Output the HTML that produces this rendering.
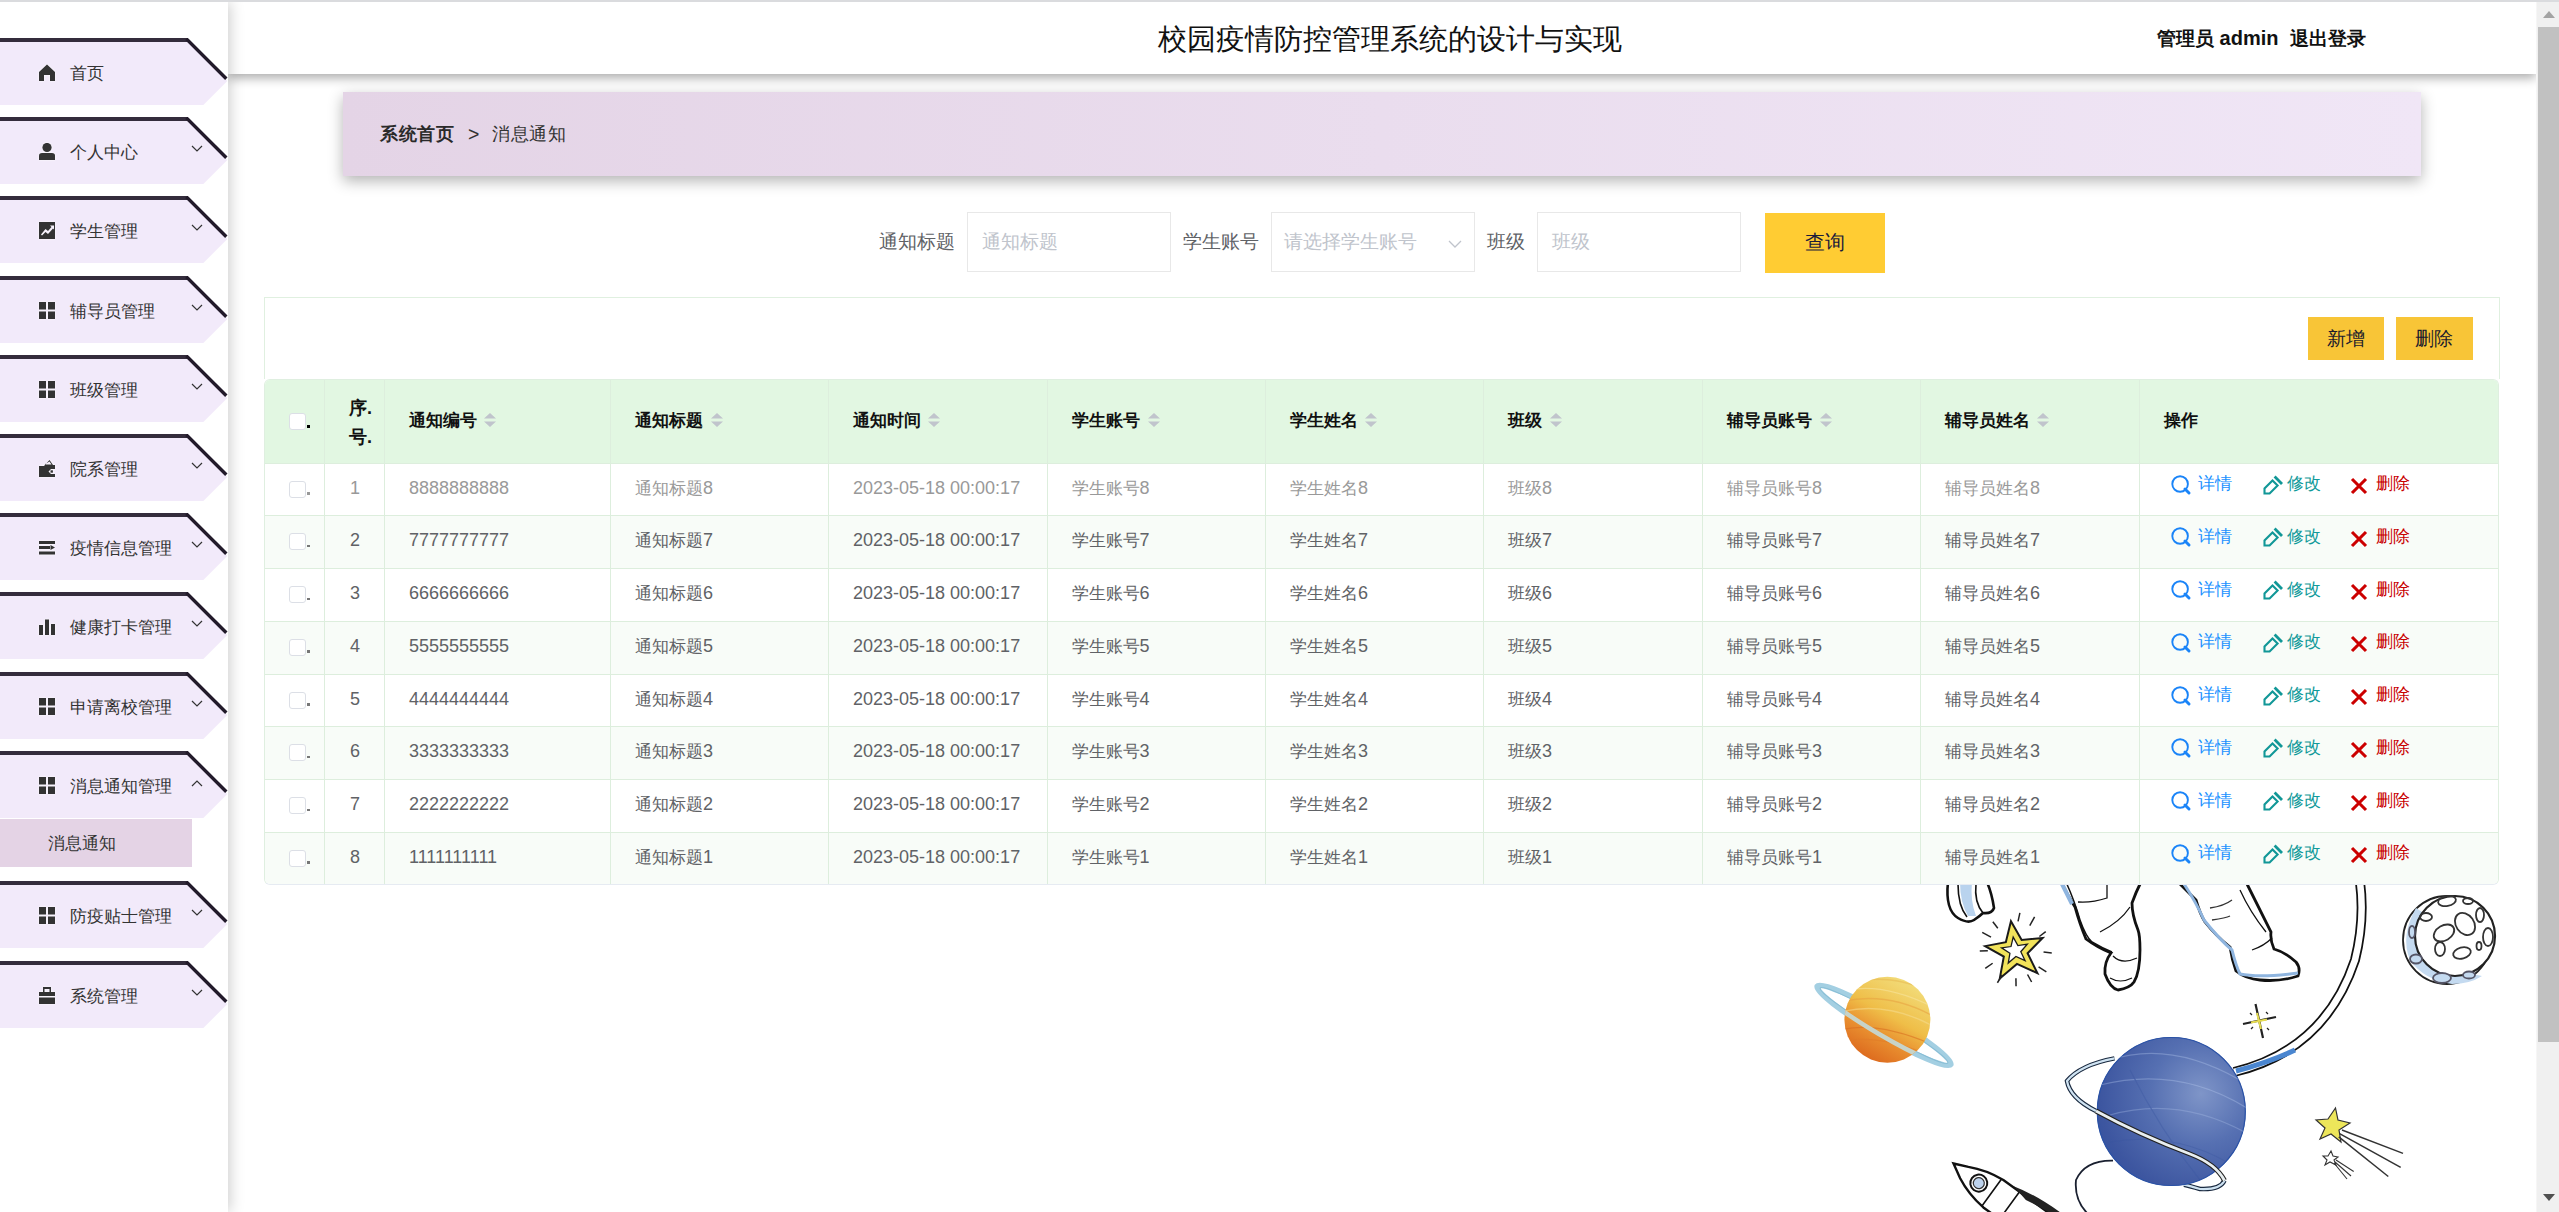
<!DOCTYPE html>
<html><head><meta charset="utf-8"><title>消息通知</title>
<style>
*{box-sizing:border-box;margin:0;padding:0}
html,body{width:2559px;height:1212px;overflow:hidden;background:#fff;font-family:"Liberation Sans", sans-serif;}
.abs{position:absolute}
#topline{position:absolute;left:0;top:0;width:2559px;height:2px;background:#dadbde;z-index:10}
#side{position:absolute;left:0;top:2px;width:228px;height:1210px;background:#fff;box-shadow:2px 0 14px rgba(0,0,0,0.2);z-index:5}
.mi{position:absolute;left:0;width:230px;height:68px}
.mi .shape{position:absolute;left:0;top:0}
.mi .ico{position:absolute;left:39px;top:26px;filter:drop-shadow(0 0 1px #fff)}
.mi .ml{position:absolute;left:70px;top:22px;font-size:16.5px;line-height:26px;color:#333;white-space:nowrap}
.mi .chev{position:absolute;left:191px;top:28px}
#sub{position:absolute;left:0;top:817px;width:192px;height:48px;background:#e4d3e5}
#sub span{position:absolute;left:48px;top:11px;font-size:16.5px;line-height:26px;color:#333}
#header{position:absolute;left:228px;top:2px;width:2308px;height:72px;background:#fff;box-shadow:0 4px 10px rgba(0,0,0,0.33);z-index:3}
#title{position:absolute;left:930px;top:17px;font-size:29px;line-height:40px;color:#111;white-space:nowrap}
#user .c{font-size:18.7px}
#user{position:absolute;left:1929px;top:22px;font-size:20px;line-height:28px;font-weight:bold;color:#111;white-space:nowrap}
#sb{position:absolute;left:2536px;top:2px;width:23px;height:1210px;background:#f0f0f0;border-left:1px solid #f6f6f6;z-index:20}
#thumb{position:absolute;left:1px;top:25px;width:21px;height:1015px;background:#c1c1c1}
#bc{position:absolute;left:343px;top:92px;width:2078px;height:84px;background:linear-gradient(90deg,#e4d4e6,#f0e6f6);box-shadow:0 5px 14px rgba(0,0,0,0.3)}
#bc .b1{position:absolute;left:37px;top:29px;font-size:18px;letter-spacing:0.6px;line-height:26px;font-weight:bold;color:#2a2a2a}
#bc .b2{position:absolute;left:125px;top:29px;font-size:19.5px;line-height:26px;color:#333}
#bc .b3{position:absolute;left:149px;top:29px;letter-spacing:0.6px;font-size:18.3px;line-height:26px;color:#333}
.lbl{position:absolute;top:229px;margin-left:1px;font-size:18.7px;line-height:26px;color:#606266;white-space:nowrap}
.inp{position:absolute;top:212px;height:60px;border:1.5px solid #e8e8e8;background:#fff}
.inp span{position:absolute;left:14px;top:16px;font-size:18.66px;line-height:26px;color:#c0c4cc;white-space:nowrap}
#qbtn{position:absolute;left:1765px;top:213px;width:120px;height:60px;background:#ffcc33}
#qbtn span{position:absolute;left:40px;top:16px;font-size:19.5px;line-height:26px;color:#1c1c3a}
#box{position:absolute;left:264px;top:297px;width:2236px;height:82px;border:1px solid #e0f0e0;border-bottom:none}
.ybtn{position:absolute;top:317px;width:76px;height:43px;background:#f8c537}
.ybtn span{position:absolute;left:19px;top:9px;font-size:18.5px;line-height:26px;color:#1c1c2c}
#tbl{position:absolute;left:264px;top:379px;width:2235px;height:506px;border-radius:6px;overflow:hidden;background:#fff;border:1px solid #dfefe0;border-bottom:1.5px solid #e6ebf2}
.cell{position:absolute;border-right:1.5px solid #ddeedd;border-bottom:1.5px solid #ddeedd}
.hc{background:#e2f7e2}
.bc{background:#fff}
.bc.st{background:#f8fcf8}
.ht{position:absolute;left:24px;top:28px;font-size:17px;line-height:26px;font-weight:bold;color:#111;white-space:nowrap}
.sort{position:absolute;top:32.5px;margin-left:-1.5px}
.idxh{position:absolute;left:24px;top:14px;font-size:18px;line-height:29px;font-weight:bold;color:#111}
.cb{position:absolute;left:24px;top:33px;width:17px;height:17px;border:1.5px solid #dcdfe6;border-radius:3px;background:#fff}
.hc .cb{top:32.5px}
.bc .cb{top:17px}
.dot{position:absolute;left:42px;width:3px;height:3px;font-size:0;background:#000}
.hc .dot{top:45px}
.bc .dot{top:28.5px;width:2.5px;height:2.5px;background:#777}
.bc.r1 .dot{background:#999}
.t{position:absolute;left:24px;top:11px;font-size:18px;line-height:26px;color:#606266;white-space:nowrap}
.t .c{font-size:17.1px}
.idx .t{left:25px}
.r1 .t{color:#999}
.ic{position:absolute}
.ot{position:absolute;top:7.5px;font-size:17.1px;line-height:26px;white-space:nowrap}
#art{position:absolute;left:1780px;top:880px;width:756px;height:332px;z-index:0}
</style></head><body>
<div id="topline"></div>
<div id="header"><div id="title">校园疫情防控管理系统的设计与实现</div><div id="user"><span class="c">管理员</span> admin&nbsp; <span class="c">退出登录</span></div></div>
<div id="side">
<div class="mi" style="top:36.0px">
<svg class="shape" width="230" height="68" viewBox="0 0 230 68"><polygon points="0,4 188,4 227.3,43 203.3,67 0,67" fill="#f2eafa"/><rect x="0" y="0" width="188" height="4" fill="#342c3c"/><path d="M186.3 0.8 L226.3 40.8" stroke="#221a2a" stroke-width="3.4"/></svg>
<svg class="ico" width="16" height="17" viewBox="0 0 16 17" fill="#333"><path d="M8 0.5 L16 8 V17 H11 V11 H5 V17 H0 V8 Z"/></svg>
<span class="ml">首页</span></div>
<div class="mi" style="top:115.0px">
<svg class="shape" width="230" height="68" viewBox="0 0 230 68"><polygon points="0,4 188,4 227.3,43 203.3,67 0,67" fill="#f2eafa"/><rect x="0" y="0" width="188" height="4" fill="#342c3c"/><path d="M186.3 0.8 L226.3 40.8" stroke="#221a2a" stroke-width="3.4"/></svg>
<svg class="ico" width="16" height="17" viewBox="0 0 16 17" fill="#333"><circle cx="8" cy="4.5" r="4.6"/><path d="M0 17 V12.5 Q0 10 3 10 H13 Q16 10 16 12.5 V17 Z"/></svg>
<span class="ml">个人中心</span><svg class="chev" width="12" height="8" viewBox="0 0 12 8"><path d="M1 1 L6 6 L11 1" fill="none" stroke="#333" stroke-width="1.2"/></svg></div>
<div class="mi" style="top:194.0px">
<svg class="shape" width="230" height="68" viewBox="0 0 230 68"><polygon points="0,4 188,4 227.3,43 203.3,67 0,67" fill="#f2eafa"/><rect x="0" y="0" width="188" height="4" fill="#342c3c"/><path d="M186.3 0.8 L226.3 40.8" stroke="#221a2a" stroke-width="3.4"/></svg>
<svg class="ico" width="16" height="17" viewBox="0 0 16 17" fill="#333"><path fill-rule="evenodd" d="M0 0 H16 V17 H0 Z M2 12.5 L3 13.5 L6.5 10 L9 12 L14 6.5 L15 7.5 V3.5 H11 L12.5 5 L9 9 L6.5 7 Z"/></svg>
<span class="ml">学生管理</span><svg class="chev" width="12" height="8" viewBox="0 0 12 8"><path d="M1 1 L6 6 L11 1" fill="none" stroke="#333" stroke-width="1.2"/></svg></div>
<div class="mi" style="top:274.0px">
<svg class="shape" width="230" height="68" viewBox="0 0 230 68"><polygon points="0,4 188,4 227.3,43 203.3,67 0,67" fill="#f2eafa"/><rect x="0" y="0" width="188" height="4" fill="#342c3c"/><path d="M186.3 0.8 L226.3 40.8" stroke="#221a2a" stroke-width="3.4"/></svg>
<svg class="ico" width="16" height="17" viewBox="0 0 16 17" fill="#333"><rect x="0" y="0" width="7" height="7.5"/><rect x="9" y="0" width="7" height="7.5"/><rect x="0" y="9.5" width="7" height="7.5"/><rect x="9" y="9.5" width="7" height="7.5"/></svg>
<span class="ml">辅导员管理</span><svg class="chev" width="12" height="8" viewBox="0 0 12 8"><path d="M1 1 L6 6 L11 1" fill="none" stroke="#333" stroke-width="1.2"/></svg></div>
<div class="mi" style="top:353.0px">
<svg class="shape" width="230" height="68" viewBox="0 0 230 68"><polygon points="0,4 188,4 227.3,43 203.3,67 0,67" fill="#f2eafa"/><rect x="0" y="0" width="188" height="4" fill="#342c3c"/><path d="M186.3 0.8 L226.3 40.8" stroke="#221a2a" stroke-width="3.4"/></svg>
<svg class="ico" width="16" height="17" viewBox="0 0 16 17" fill="#333"><rect x="0" y="0" width="7" height="7.5"/><rect x="9" y="0" width="7" height="7.5"/><rect x="0" y="9.5" width="7" height="7.5"/><rect x="9" y="9.5" width="7" height="7.5"/></svg>
<span class="ml">班级管理</span><svg class="chev" width="12" height="8" viewBox="0 0 12 8"><path d="M1 1 L6 6 L11 1" fill="none" stroke="#333" stroke-width="1.2"/></svg></div>
<div class="mi" style="top:432.0px">
<svg class="shape" width="230" height="68" viewBox="0 0 230 68"><polygon points="0,4 188,4 227.3,43 203.3,67 0,67" fill="#f2eafa"/><rect x="0" y="0" width="188" height="4" fill="#342c3c"/><path d="M186.3 0.8 L226.3 40.8" stroke="#221a2a" stroke-width="3.4"/></svg>
<svg class="ico" width="16" height="17" viewBox="0 0 16 17" fill="#333"><path fill-rule="evenodd" d="M0 6 H5 L10.5 0 L14 5 H16 V9 H12 L9.5 11.5 L12 14 H16 V17 H0 Z M5.5 4.5 H12.5 L10.5 1.5 Z"/><rect x="11.5" y="10.3" width="2.4" height="2.4"/></svg>
<span class="ml">院系管理</span><svg class="chev" width="12" height="8" viewBox="0 0 12 8"><path d="M1 1 L6 6 L11 1" fill="none" stroke="#333" stroke-width="1.2"/></svg></div>
<div class="mi" style="top:511.0px">
<svg class="shape" width="230" height="68" viewBox="0 0 230 68"><polygon points="0,4 188,4 227.3,43 203.3,67 0,67" fill="#f2eafa"/><rect x="0" y="0" width="188" height="4" fill="#342c3c"/><path d="M186.3 0.8 L226.3 40.8" stroke="#221a2a" stroke-width="3.4"/></svg>
<svg class="ico" width="16" height="17" viewBox="0 0 16 17" fill="#333"><rect x="0" y="2" width="16" height="3"/><rect x="0" y="7" width="11" height="3"/><rect x="0" y="12.5" width="16" height="3"/><path d="M11.5 6 L16 8.5 L11.5 11 Z"/></svg>
<span class="ml">疫情信息管理</span><svg class="chev" width="12" height="8" viewBox="0 0 12 8"><path d="M1 1 L6 6 L11 1" fill="none" stroke="#333" stroke-width="1.2"/></svg></div>
<div class="mi" style="top:590.0px">
<svg class="shape" width="230" height="68" viewBox="0 0 230 68"><polygon points="0,4 188,4 227.3,43 203.3,67 0,67" fill="#f2eafa"/><rect x="0" y="0" width="188" height="4" fill="#342c3c"/><path d="M186.3 0.8 L226.3 40.8" stroke="#221a2a" stroke-width="3.4"/></svg>
<svg class="ico" width="16" height="17" viewBox="0 0 16 17" fill="#333"><rect x="0" y="7" width="4" height="10"/><rect x="6" y="1.5" width="4" height="15.5"/><rect x="12" y="6" width="4" height="11"/></svg>
<span class="ml">健康打卡管理</span><svg class="chev" width="12" height="8" viewBox="0 0 12 8"><path d="M1 1 L6 6 L11 1" fill="none" stroke="#333" stroke-width="1.2"/></svg></div>
<div class="mi" style="top:670.0px">
<svg class="shape" width="230" height="68" viewBox="0 0 230 68"><polygon points="0,4 188,4 227.3,43 203.3,67 0,67" fill="#f2eafa"/><rect x="0" y="0" width="188" height="4" fill="#342c3c"/><path d="M186.3 0.8 L226.3 40.8" stroke="#221a2a" stroke-width="3.4"/></svg>
<svg class="ico" width="16" height="17" viewBox="0 0 16 17" fill="#333"><rect x="0" y="0" width="7" height="7.5"/><rect x="9" y="0" width="7" height="7.5"/><rect x="0" y="9.5" width="7" height="7.5"/><rect x="9" y="9.5" width="7" height="7.5"/></svg>
<span class="ml">申请离校管理</span><svg class="chev" width="12" height="8" viewBox="0 0 12 8"><path d="M1 1 L6 6 L11 1" fill="none" stroke="#333" stroke-width="1.2"/></svg></div>
<div class="mi" style="top:749.0px">
<svg class="shape" width="230" height="68" viewBox="0 0 230 68"><polygon points="0,4 188,4 227.3,43 203.3,67 0,67" fill="#f2eafa"/><rect x="0" y="0" width="188" height="4" fill="#342c3c"/><path d="M186.3 0.8 L226.3 40.8" stroke="#221a2a" stroke-width="3.4"/></svg>
<svg class="ico" width="16" height="17" viewBox="0 0 16 17" fill="#333"><rect x="0" y="0" width="7" height="7.5"/><rect x="9" y="0" width="7" height="7.5"/><rect x="0" y="9.5" width="7" height="7.5"/><rect x="9" y="9.5" width="7" height="7.5"/></svg>
<span class="ml">消息通知管理</span><svg class="chev" width="12" height="8" viewBox="0 0 12 8"><path d="M1 7 L6 2 L11 7" fill="none" stroke="#333" stroke-width="1.2"/></svg></div>
<div class="mi" style="top:879.0px">
<svg class="shape" width="230" height="68" viewBox="0 0 230 68"><polygon points="0,4 188,4 227.3,43 203.3,67 0,67" fill="#f2eafa"/><rect x="0" y="0" width="188" height="4" fill="#342c3c"/><path d="M186.3 0.8 L226.3 40.8" stroke="#221a2a" stroke-width="3.4"/></svg>
<svg class="ico" width="16" height="17" viewBox="0 0 16 17" fill="#333"><rect x="0" y="0" width="7" height="7.5"/><rect x="9" y="0" width="7" height="7.5"/><rect x="0" y="9.5" width="7" height="7.5"/><rect x="9" y="9.5" width="7" height="7.5"/></svg>
<span class="ml">防疫贴士管理</span><svg class="chev" width="12" height="8" viewBox="0 0 12 8"><path d="M1 1 L6 6 L11 1" fill="none" stroke="#333" stroke-width="1.2"/></svg></div>
<div class="mi" style="top:959.0px">
<svg class="shape" width="230" height="68" viewBox="0 0 230 68"><polygon points="0,4 188,4 227.3,43 203.3,67 0,67" fill="#f2eafa"/><rect x="0" y="0" width="188" height="4" fill="#342c3c"/><path d="M186.3 0.8 L226.3 40.8" stroke="#221a2a" stroke-width="3.4"/></svg>
<svg class="ico" width="16" height="17" viewBox="0 0 16 17" fill="#333"><path fill-rule="evenodd" d="M4 0 H12 V5 H16 V9 H0 V5 H4 Z M5.5 2 V5 H10.5 V2 Z"/><rect x="0" y="10.5" width="16" height="6.5"/></svg>
<span class="ml">系统管理</span><svg class="chev" width="12" height="8" viewBox="0 0 12 8"><path d="M1 1 L6 6 L11 1" fill="none" stroke="#333" stroke-width="1.2"/></svg></div>
<div id="sub"><span>消息通知</span></div>
</div>
<div id="bc"><span class="b1">系统首页</span><span class="b2">&gt;</span><span class="b3">消息通知</span></div>
<span class="lbl" style="left:878px">通知标题</span>
<div class="inp" style="left:967px;width:204px"><span>通知标题</span></div>
<span class="lbl" style="left:1182px">学生账号</span>
<div class="inp" style="left:1271px;width:204px"><span style="left:12px">请选择学生账号</span><svg style="position:absolute;left:176px;top:27px" width="14" height="8" viewBox="0 0 14 8"><path d="M1 1 L7 7 L13 1" fill="none" stroke="#c0c4cc" stroke-width="1.3"/></svg></div>
<span class="lbl" style="left:1486px">班级</span>
<div class="inp" style="left:1537px;width:204px"><span>班级</span></div>
<div id="qbtn"><span>查询</span></div>
<svg id="art" width="756" height="332" viewBox="0 0 756 332"><defs>
<radialGradient id="gb" cx="0.7" cy="0.38" r="0.85"><stop offset="0" stop-color="#7f95c8"/><stop offset="0.4" stop-color="#5670b2"/><stop offset="0.8" stop-color="#3d56a0"/><stop offset="1" stop-color="#2f4f9e"/></radialGradient>
<linearGradient id="go" x1="0.75" y1="0.05" x2="0.25" y2="0.95"><stop offset="0" stop-color="#f2dc7a"/><stop offset="0.45" stop-color="#efbe48"/><stop offset="0.7" stop-color="#e99030"/><stop offset="1" stop-color="#dd6a1e"/></linearGradient>
<clipPath id="cpo"><circle cx="107.4" cy="139.7" r="43"/></clipPath>
<clipPath id="cpb"><circle cx="391.3" cy="231.5" r="74.5"/></clipPath>
</defs>
<!-- orange planet ring back -->
<g transform="translate(104 145.4) rotate(30.45)">
<ellipse cx="0" cy="0" rx="77.5" ry="10" fill="none" stroke="#a3cfe2" stroke-width="5.5"/>
<ellipse cx="0" cy="0" rx="74" ry="7.5" fill="none" stroke="#86bcd4" stroke-width="0.9"/>
</g>
<circle cx="107.4" cy="139.7" r="43" fill="url(#go)"/>
<g clip-path="url(#cpo)" fill="none" stroke-width="1.4" opacity="0.55">
<path d="M60 112 Q100 100 155 128" stroke="#f8e6a0"/><path d="M60 122 Q110 110 160 140" stroke="#e8a040"/><path d="M60 132 Q110 120 160 150" stroke="#f6dc90"/><path d="M60 150 Q100 140 160 168" stroke="#d86a20"/><path d="M60 162 Q100 152 160 180" stroke="#e07a28"/><path d="M80 100 Q120 96 150 112" stroke="#e8b850"/>
</g>
<g clip-path="url(#cpo)"><g transform="translate(104 145.4) rotate(30.45)">
<path d="M-77.5 0 A77.5 10 0 0 0 77.5 0" fill="none" stroke="#c7d3c8" stroke-width="4.5"/>
</g></g>
<!-- star 1 -->
<g transform="translate(235 70) rotate(-8)">
<path d="M0 -29 L8 -9 L29 -8 L12 5 L19 26 L0 14 L-19 26 L-12 5 L-29 -8 L-8 -9 Z" fill="#f2e35a" stroke="#1a1a1a" stroke-width="2"/>
<path d="M0 -13 L3.5 -4 L13 -4 L5.5 2.5 L8.5 12 L0 6.5 L-8.5 12 L-5.5 2.5 L-13 -4 L-3.5 -4 Z" fill="#fff" stroke="#1a1a1a" stroke-width="1.3"/>
<g stroke="#222" stroke-width="1.5"><path d="M-30 -22 L-22 -16"/><path d="M-18 -31 L-14 -24"/><path d="M-35 -4 L-27 -3"/><path d="M-32 14 L-24 10"/><path d="M-22 30 L-16 23"/><path d="M-4 36 L-3 28"/><path d="M12 34 L9 26"/><path d="M28 26 L21 20"/><path d="M36 8 L28 6"/><path d="M33 -14 L26 -10"/><path d="M24 -30 L18 -22"/><path d="M10 -36 L7 -28"/></g>
</g>
<!-- hand -->
<path d="M168 2 Q165 30 178 38 Q188 44 194 40 Q200 36 203 33 Q212 34 214 28 Q212 14 207 2" fill="#fff" stroke="#111" stroke-width="2.6"/>
<path d="M180 2 Q180 22 188 36 L196 36 Q190 20 192 2 Z" fill="#b9d3ee"/>
<path d="M178 4 Q178 26 187 37" fill="none" stroke="#111" stroke-width="1.6"/>
<path d="M196 4 Q194 22 203 33" fill="none" stroke="#111" stroke-width="1.6"/>
<!-- left leg -->
<path d="M281 2 Q288 16 295 27 Q300 45 306 59 Q318 68 331 73 Q324 82 325 94 Q330 108 338 110 Q350 108 354 102 Q360 92 360 70 Q360 55 358 50 Q352 35 352 23 Q356 12 361 2" fill="#fff" stroke="#111" stroke-width="2.8"/>
<path d="M286 2 Q295 22 300 40 Q306 57 312 62 Q322 68 332 72" fill="none" stroke="#111" stroke-width="1.5"/>
<path d="M282 4 L292 24" stroke="#8fb5df" stroke-width="4"/>
<path d="M298 22 Q312 23 327 18 L327 2" fill="none" stroke="#111" stroke-width="1.3"/>
<path d="M320 52 Q340 42 350 27" fill="none" stroke="#111" stroke-width="1.3"/>
<path d="M333 76 Q342 85 357 78" fill="none" stroke="#111" stroke-width="1.3"/>
<path d="M330 98 Q340 104 352 98" fill="none" stroke="#111" stroke-width="1.2"/>
<!-- right leg -->
<path d="M398 2 Q408 12 416 20 Q420 34 425 42 Q436 56 450 67 Q452 80 456 91 Q466 99 480 100 Q500 102 518 96 Q521 88 516 82 Q505 72 494 69 Q490 60 491 52 Q480 30 468 6 L466 2" fill="#fff" stroke="#111" stroke-width="2.8"/>
<path d="M404 4 Q416 22 424 40 Q440 60 452 70 Q456 86 460 94 Q480 98 518 93" fill="none" stroke="#8fb5df" stroke-width="3"/>
<path d="M460 10 Q470 32 486 52" fill="none" stroke="#111" stroke-width="1.3"/>
<path d="M472 70 Q484 66 492 58" fill="none" stroke="#111" stroke-width="1.3"/>
<path d="M430 28 Q444 26 452 20" fill="none" stroke="#333" stroke-width="1.3"/>
<path d="M432 40 Q446 38 450 36" fill="none" stroke="#333" stroke-width="1.3"/>
<!-- hose up -->
<path d="M454 192 Q545 170 575 80 Q585 40 580 2" fill="none" stroke="#111" stroke-width="10"/>
<path d="M454 192 Q545 170 575 80 Q585 40 580 2" fill="none" stroke="#fff" stroke-width="6.5"/>
<path d="M456 191 Q490 182 515 170" fill="none" stroke="#4a86d0" stroke-width="5"/>
<!-- moon -->
<circle cx="667" cy="60" r="44" fill="#fff" stroke="#222" stroke-width="1.8"/>
<path d="M636 28 Q620 56 630 80 Q644 100 672 104 Q690 104 702 96 Q680 92 660 84 Q640 66 642 32 Z" fill="#c4daf0"/>
<circle cx="675" cy="56" r="40" fill="#fff" stroke="#222" stroke-width="2.2"/>
<g fill="none" stroke="#333" stroke-width="1.8">
<ellipse cx="664" cy="53" rx="11" ry="7.5" transform="rotate(-30 664 53)"/><ellipse cx="685" cy="44" rx="9" ry="12" transform="rotate(-35 685 44)"/><ellipse cx="646" cy="37" rx="6" ry="4"/><ellipse cx="660" cy="69" rx="5" ry="7"/><ellipse cx="682" cy="73" rx="9" ry="5.5" transform="rotate(-15 682 73)"/><ellipse cx="708" cy="57" rx="5" ry="9"/><ellipse cx="699" cy="66" rx="2.5" ry="4"/><ellipse cx="667" cy="21" rx="9" ry="5" transform="rotate(-10 667 21)"/><ellipse cx="688" cy="21" rx="5" ry="3"/><ellipse cx="700" cy="35" rx="4" ry="7"/>
<ellipse cx="632" cy="52" rx="3" ry="6" stroke="#556" fill="#c4daf0"/><ellipse cx="636" cy="79" rx="6" ry="4.5" stroke="#556" fill="#c4daf0"/><ellipse cx="662" cy="98" rx="9" ry="5" stroke="#556" fill="#c4daf0"/><ellipse cx="689" cy="95" rx="6" ry="3.5" stroke="#556" fill="#c4daf0"/>
</g>
<!-- sparkle -->
<g transform="translate(479 141)"><path d="M-3.5 -17 L4 17 M-16 3 L17 -4" stroke="#222" stroke-width="2.2"/><path d="M-2 -8 L2 8 M-8 1.5 L8 -1.5" stroke="#e6dc50" stroke-width="2"/>
<g stroke="#222" stroke-width="1.3"><path d="M-9 -8 L-7 -6"/><path d="M7 -9 L9 -7"/><path d="M-8 8 L-6 6"/><path d="M8 7 L10 9"/></g></g>
<!-- blue planet hose ring back -->
<path d="M334.5 178.4 Q300 185 287 201 Q290 218 316 231" fill="none" stroke="#1a2a40" stroke-width="4.5"/>
<path d="M334.5 178.4 Q300 185 287 201 Q290 218 316 231" fill="none" stroke="#cfe3f2" stroke-width="2.2"/>
<path d="M444.5 300.5 Q440 310 420 309 Q410 306 404 304.7" fill="none" stroke="#1a2a40" stroke-width="4.5"/>
<path d="M444.5 300.5 Q440 310 420 309 Q410 306 404 304.7" fill="none" stroke="#cfe3f2" stroke-width="2.2"/>
<circle cx="391.3" cy="231.5" r="74.5" fill="url(#gb)"/>
<circle cx="391.3" cy="231.5" r="74" fill="none" stroke="#2a52a6" stroke-width="1.2"/>
<g clip-path="url(#cpb)" fill="none" stroke-width="1.2" opacity="0.35">
<path d="M330 180 Q390 160 460 200" stroke="#b8cbef"/><path d="M320 205 Q400 185 470 230" stroke="#b8cbef"/><path d="M330 235 Q400 215 470 255" stroke="#a9bde6"/><path d="M330 262 Q400 250 460 290" stroke="#3a56a0"/><path d="M350 190 Q380 250 420 300" stroke="#3a56a0"/>
</g>
<path d="M316 231 Q360 255 410 274 Q436 284 444.5 300.5" fill="none" stroke="#222" stroke-width="5"/>
<path d="M316 231 Q360 255 410 274 Q436 284 444.5 300.5" fill="none" stroke="#e8eef0" stroke-width="2.8"/>
<!-- bottom hose loop -->
<path d="M333 280.6 Q305 280 296 300 Q294 320 308 334" fill="none" stroke="#1a2030" stroke-width="1.8"/>
<!-- shooting star -->
<path d="M555.5 228 L558 240 L570 243 L559 250 L561 262 L551 254 L540 259 L545 248 L536 240 L548 239 Z" fill="#ede65a" stroke="#333" stroke-width="1.2"/>
<g stroke="#333" stroke-width="1.5"><path d="M562 250 L623 273.4"/><path d="M559.6 253.6 L620.7 287.4"/><path d="M558.8 256.9 L608.3 296.5"/></g>
<path d="M551 271 L553 276 L558 277 L554 280 L556 285 L550 282 L545 285 L547 280 L543 276 L548 276 Z" fill="#fff" stroke="#333" stroke-width="1.1"/>
<g stroke="#333" stroke-width="1.1"><path d="M556 280 L573.7 291.5"/><path d="M554 283 L567 299"/><path d="M555 282 L571 296"/></g>
<!-- rocket -->
<g transform="translate(173.5 283.5) rotate(36)">
<path d="M0 0 L14 -6 Q30 -14 50 -16 L150 -16 L150 18 L50 18 Q30 16 14 8 Z" fill="#fff" stroke="#111" stroke-width="2.4"/>
<circle cx="32" cy="1" r="8.5" fill="#fff" stroke="#111" stroke-width="2"/>
<circle cx="32" cy="1" r="5.5" fill="#bdd3ee" stroke="#333" stroke-width="1.2"/>
<path d="M48 -16 L48 18 M70 -16 L70 18" stroke="#111" stroke-width="1.6"/>
<path d="M62 -17 Q95 -26 150 -22 L150 -17 Q110 -19 80 -13 Z" fill="#222"/>
</g>
</svg>
<div id="box"></div>
<div class="ybtn" style="left:2308px"><span>新增</span></div>
<div class="ybtn" style="left:2396px;width:77px"><span>删除</span></div>
<div id="tbl">
<div class="cell hc ck" style="left:0.0px;top:0.00px;width:60.0px;height:83.50px"><span class="cb"></span><span class="dot">.</span></div>
<div class="cell hc idx" style="left:60.0px;top:0.00px;width:60.0px;height:83.50px"><span class="idxh">序.<br>号.</span></div>
<div class="cell hc" style="left:120.0px;top:0.00px;width:226.0px;height:83.50px"><span class="ht">通知编号</span><svg class="sort" style="left:100.8px" width="12" height="14" viewBox="0 0 12 14"><path d="M6 0 L12 5.5 H0 Z M0 8.5 H12 L6 14 Z" fill="#c0c4cc"/></svg></div>
<div class="cell hc" style="left:346.0px;top:0.00px;width:218.0px;height:83.50px"><span class="ht">通知标题</span><svg class="sort" style="left:101px" width="12" height="14" viewBox="0 0 12 14"><path d="M6 0 L12 5.5 H0 Z M0 8.5 H12 L6 14 Z" fill="#c0c4cc"/></svg></div>
<div class="cell hc" style="left:564.0px;top:0.00px;width:218.5px;height:83.50px"><span class="ht">通知时间</span><svg class="sort" style="left:100.9px" width="12" height="14" viewBox="0 0 12 14"><path d="M6 0 L12 5.5 H0 Z M0 8.5 H12 L6 14 Z" fill="#c0c4cc"/></svg></div>
<div class="cell hc" style="left:782.5px;top:0.00px;width:218.5px;height:83.50px"><span class="ht">学生账号</span><svg class="sort" style="left:101.8px" width="12" height="14" viewBox="0 0 12 14"><path d="M6 0 L12 5.5 H0 Z M0 8.5 H12 L6 14 Z" fill="#c0c4cc"/></svg></div>
<div class="cell hc" style="left:1001.0px;top:0.00px;width:218.0px;height:83.50px"><span class="ht">学生姓名</span><svg class="sort" style="left:100.7px" width="12" height="14" viewBox="0 0 12 14"><path d="M6 0 L12 5.5 H0 Z M0 8.5 H12 L6 14 Z" fill="#c0c4cc"/></svg></div>
<div class="cell hc" style="left:1219.0px;top:0.00px;width:219.0px;height:83.50px"><span class="ht">班级</span><svg class="sort" style="left:67.7px" width="12" height="14" viewBox="0 0 12 14"><path d="M6 0 L12 5.5 H0 Z M0 8.5 H12 L6 14 Z" fill="#c0c4cc"/></svg></div>
<div class="cell hc" style="left:1438.0px;top:0.00px;width:218.0px;height:83.50px"><span class="ht">辅导员账号</span><svg class="sort" style="left:118px" width="12" height="14" viewBox="0 0 12 14"><path d="M6 0 L12 5.5 H0 Z M0 8.5 H12 L6 14 Z" fill="#c0c4cc"/></svg></div>
<div class="cell hc" style="left:1656.0px;top:0.00px;width:218.5px;height:83.50px"><span class="ht">辅导员姓名</span><svg class="sort" style="left:117px" width="12" height="14" viewBox="0 0 12 14"><path d="M6 0 L12 5.5 H0 Z M0 8.5 H12 L6 14 Z" fill="#c0c4cc"/></svg></div>
<div class="cell hc" style="left:1874.5px;top:0.00px;width:360.0px;height:83.50px"><span class="ht">操作</span></div>
<div class="cell bc ck  r1" style="left:0.0px;top:83.50px;width:60.0px;height:52.75px"><span class="cb"></span><span class="dot">.</span></div>
<div class="cell bc idx  r1" style="left:60.0px;top:83.50px;width:60.0px;height:52.75px"><span class="t">1</span></div>
<div class="cell bc  r1" style="left:120.0px;top:83.50px;width:226.0px;height:52.75px"><span class="t">8888888888</span></div>
<div class="cell bc  r1" style="left:346.0px;top:83.50px;width:218.0px;height:52.75px"><span class="t"><span class="c">通知标题</span>8</span></div>
<div class="cell bc  r1" style="left:564.0px;top:83.50px;width:218.5px;height:52.75px"><span class="t">2023-05-18 00:00:17</span></div>
<div class="cell bc  r1" style="left:782.5px;top:83.50px;width:218.5px;height:52.75px"><span class="t"><span class="c">学生账号</span>8</span></div>
<div class="cell bc  r1" style="left:1001.0px;top:83.50px;width:218.0px;height:52.75px"><span class="t"><span class="c">学生姓名</span>8</span></div>
<div class="cell bc  r1" style="left:1219.0px;top:83.50px;width:219.0px;height:52.75px"><span class="t"><span class="c">班级</span>8</span></div>
<div class="cell bc  r1" style="left:1438.0px;top:83.50px;width:218.0px;height:52.75px"><span class="t"><span class="c">辅导员账号</span>8</span></div>
<div class="cell bc  r1" style="left:1656.0px;top:83.50px;width:218.5px;height:52.75px"><span class="t"><span class="c">辅导员姓名</span>8</span></div>
<div class="cell bc opc " style="left:1874.5px;top:83.50px;width:360.0px;height:52.75px"><svg class="ic" style="left:30px;top:10px" width="22" height="22" viewBox="0 0 22 22"><circle cx="10.1" cy="10" r="7.8" fill="none" stroke="#1a84f8" stroke-width="1.9"/><path d="M15 15 L19 19" stroke="#1a84f8" stroke-width="3" stroke-linecap="round"/></svg><span class="ot" style="left:58px;color:#1890ff">详情</span><svg class="ic" style="left:121px;top:11px" width="24" height="22" viewBox="0 0 24 22"><path d="M3.5 18.5 V13.4 L11.5 5.4 L16.6 10.5 L8.6 18.5 Z" fill="none" stroke="#119797" stroke-width="2.1" stroke-linejoin="miter"/><path d="M13.6 1.6 L21 9" stroke="#119797" stroke-width="2.8"/></svg><span class="ot" style="left:147px;color:#129a9a">修改</span><svg class="ic" style="left:209.5px;top:12.5px" width="20" height="20" viewBox="0 0 20 20"><path d="M3 3 L17 17 M17 3 L3 17" stroke="#cc0000" stroke-width="3.1"/></svg><span class="ot" style="left:236.5px;color:#c80000">删除</span></div>
<div class="cell bc ck st " style="left:0.0px;top:136.25px;width:60.0px;height:52.75px"><span class="cb"></span><span class="dot">.</span></div>
<div class="cell bc idx st " style="left:60.0px;top:136.25px;width:60.0px;height:52.75px"><span class="t">2</span></div>
<div class="cell bc st " style="left:120.0px;top:136.25px;width:226.0px;height:52.75px"><span class="t">7777777777</span></div>
<div class="cell bc st " style="left:346.0px;top:136.25px;width:218.0px;height:52.75px"><span class="t"><span class="c">通知标题</span>7</span></div>
<div class="cell bc st " style="left:564.0px;top:136.25px;width:218.5px;height:52.75px"><span class="t">2023-05-18 00:00:17</span></div>
<div class="cell bc st " style="left:782.5px;top:136.25px;width:218.5px;height:52.75px"><span class="t"><span class="c">学生账号</span>7</span></div>
<div class="cell bc st " style="left:1001.0px;top:136.25px;width:218.0px;height:52.75px"><span class="t"><span class="c">学生姓名</span>7</span></div>
<div class="cell bc st " style="left:1219.0px;top:136.25px;width:219.0px;height:52.75px"><span class="t"><span class="c">班级</span>7</span></div>
<div class="cell bc st " style="left:1438.0px;top:136.25px;width:218.0px;height:52.75px"><span class="t"><span class="c">辅导员账号</span>7</span></div>
<div class="cell bc st " style="left:1656.0px;top:136.25px;width:218.5px;height:52.75px"><span class="t"><span class="c">辅导员姓名</span>7</span></div>
<div class="cell bc opc st" style="left:1874.5px;top:136.25px;width:360.0px;height:52.75px"><svg class="ic" style="left:30px;top:10px" width="22" height="22" viewBox="0 0 22 22"><circle cx="10.1" cy="10" r="7.8" fill="none" stroke="#1a84f8" stroke-width="1.9"/><path d="M15 15 L19 19" stroke="#1a84f8" stroke-width="3" stroke-linecap="round"/></svg><span class="ot" style="left:58px;color:#1890ff">详情</span><svg class="ic" style="left:121px;top:11px" width="24" height="22" viewBox="0 0 24 22"><path d="M3.5 18.5 V13.4 L11.5 5.4 L16.6 10.5 L8.6 18.5 Z" fill="none" stroke="#119797" stroke-width="2.1" stroke-linejoin="miter"/><path d="M13.6 1.6 L21 9" stroke="#119797" stroke-width="2.8"/></svg><span class="ot" style="left:147px;color:#129a9a">修改</span><svg class="ic" style="left:209.5px;top:12.5px" width="20" height="20" viewBox="0 0 20 20"><path d="M3 3 L17 17 M17 3 L3 17" stroke="#cc0000" stroke-width="3.1"/></svg><span class="ot" style="left:236.5px;color:#c80000">删除</span></div>
<div class="cell bc ck  " style="left:0.0px;top:189.00px;width:60.0px;height:52.75px"><span class="cb"></span><span class="dot">.</span></div>
<div class="cell bc idx  " style="left:60.0px;top:189.00px;width:60.0px;height:52.75px"><span class="t">3</span></div>
<div class="cell bc  " style="left:120.0px;top:189.00px;width:226.0px;height:52.75px"><span class="t">6666666666</span></div>
<div class="cell bc  " style="left:346.0px;top:189.00px;width:218.0px;height:52.75px"><span class="t"><span class="c">通知标题</span>6</span></div>
<div class="cell bc  " style="left:564.0px;top:189.00px;width:218.5px;height:52.75px"><span class="t">2023-05-18 00:00:17</span></div>
<div class="cell bc  " style="left:782.5px;top:189.00px;width:218.5px;height:52.75px"><span class="t"><span class="c">学生账号</span>6</span></div>
<div class="cell bc  " style="left:1001.0px;top:189.00px;width:218.0px;height:52.75px"><span class="t"><span class="c">学生姓名</span>6</span></div>
<div class="cell bc  " style="left:1219.0px;top:189.00px;width:219.0px;height:52.75px"><span class="t"><span class="c">班级</span>6</span></div>
<div class="cell bc  " style="left:1438.0px;top:189.00px;width:218.0px;height:52.75px"><span class="t"><span class="c">辅导员账号</span>6</span></div>
<div class="cell bc  " style="left:1656.0px;top:189.00px;width:218.5px;height:52.75px"><span class="t"><span class="c">辅导员姓名</span>6</span></div>
<div class="cell bc opc " style="left:1874.5px;top:189.00px;width:360.0px;height:52.75px"><svg class="ic" style="left:30px;top:10px" width="22" height="22" viewBox="0 0 22 22"><circle cx="10.1" cy="10" r="7.8" fill="none" stroke="#1a84f8" stroke-width="1.9"/><path d="M15 15 L19 19" stroke="#1a84f8" stroke-width="3" stroke-linecap="round"/></svg><span class="ot" style="left:58px;color:#1890ff">详情</span><svg class="ic" style="left:121px;top:11px" width="24" height="22" viewBox="0 0 24 22"><path d="M3.5 18.5 V13.4 L11.5 5.4 L16.6 10.5 L8.6 18.5 Z" fill="none" stroke="#119797" stroke-width="2.1" stroke-linejoin="miter"/><path d="M13.6 1.6 L21 9" stroke="#119797" stroke-width="2.8"/></svg><span class="ot" style="left:147px;color:#129a9a">修改</span><svg class="ic" style="left:209.5px;top:12.5px" width="20" height="20" viewBox="0 0 20 20"><path d="M3 3 L17 17 M17 3 L3 17" stroke="#cc0000" stroke-width="3.1"/></svg><span class="ot" style="left:236.5px;color:#c80000">删除</span></div>
<div class="cell bc ck st " style="left:0.0px;top:241.75px;width:60.0px;height:52.75px"><span class="cb"></span><span class="dot">.</span></div>
<div class="cell bc idx st " style="left:60.0px;top:241.75px;width:60.0px;height:52.75px"><span class="t">4</span></div>
<div class="cell bc st " style="left:120.0px;top:241.75px;width:226.0px;height:52.75px"><span class="t">5555555555</span></div>
<div class="cell bc st " style="left:346.0px;top:241.75px;width:218.0px;height:52.75px"><span class="t"><span class="c">通知标题</span>5</span></div>
<div class="cell bc st " style="left:564.0px;top:241.75px;width:218.5px;height:52.75px"><span class="t">2023-05-18 00:00:17</span></div>
<div class="cell bc st " style="left:782.5px;top:241.75px;width:218.5px;height:52.75px"><span class="t"><span class="c">学生账号</span>5</span></div>
<div class="cell bc st " style="left:1001.0px;top:241.75px;width:218.0px;height:52.75px"><span class="t"><span class="c">学生姓名</span>5</span></div>
<div class="cell bc st " style="left:1219.0px;top:241.75px;width:219.0px;height:52.75px"><span class="t"><span class="c">班级</span>5</span></div>
<div class="cell bc st " style="left:1438.0px;top:241.75px;width:218.0px;height:52.75px"><span class="t"><span class="c">辅导员账号</span>5</span></div>
<div class="cell bc st " style="left:1656.0px;top:241.75px;width:218.5px;height:52.75px"><span class="t"><span class="c">辅导员姓名</span>5</span></div>
<div class="cell bc opc st" style="left:1874.5px;top:241.75px;width:360.0px;height:52.75px"><svg class="ic" style="left:30px;top:10px" width="22" height="22" viewBox="0 0 22 22"><circle cx="10.1" cy="10" r="7.8" fill="none" stroke="#1a84f8" stroke-width="1.9"/><path d="M15 15 L19 19" stroke="#1a84f8" stroke-width="3" stroke-linecap="round"/></svg><span class="ot" style="left:58px;color:#1890ff">详情</span><svg class="ic" style="left:121px;top:11px" width="24" height="22" viewBox="0 0 24 22"><path d="M3.5 18.5 V13.4 L11.5 5.4 L16.6 10.5 L8.6 18.5 Z" fill="none" stroke="#119797" stroke-width="2.1" stroke-linejoin="miter"/><path d="M13.6 1.6 L21 9" stroke="#119797" stroke-width="2.8"/></svg><span class="ot" style="left:147px;color:#129a9a">修改</span><svg class="ic" style="left:209.5px;top:12.5px" width="20" height="20" viewBox="0 0 20 20"><path d="M3 3 L17 17 M17 3 L3 17" stroke="#cc0000" stroke-width="3.1"/></svg><span class="ot" style="left:236.5px;color:#c80000">删除</span></div>
<div class="cell bc ck  " style="left:0.0px;top:294.50px;width:60.0px;height:52.75px"><span class="cb"></span><span class="dot">.</span></div>
<div class="cell bc idx  " style="left:60.0px;top:294.50px;width:60.0px;height:52.75px"><span class="t">5</span></div>
<div class="cell bc  " style="left:120.0px;top:294.50px;width:226.0px;height:52.75px"><span class="t">4444444444</span></div>
<div class="cell bc  " style="left:346.0px;top:294.50px;width:218.0px;height:52.75px"><span class="t"><span class="c">通知标题</span>4</span></div>
<div class="cell bc  " style="left:564.0px;top:294.50px;width:218.5px;height:52.75px"><span class="t">2023-05-18 00:00:17</span></div>
<div class="cell bc  " style="left:782.5px;top:294.50px;width:218.5px;height:52.75px"><span class="t"><span class="c">学生账号</span>4</span></div>
<div class="cell bc  " style="left:1001.0px;top:294.50px;width:218.0px;height:52.75px"><span class="t"><span class="c">学生姓名</span>4</span></div>
<div class="cell bc  " style="left:1219.0px;top:294.50px;width:219.0px;height:52.75px"><span class="t"><span class="c">班级</span>4</span></div>
<div class="cell bc  " style="left:1438.0px;top:294.50px;width:218.0px;height:52.75px"><span class="t"><span class="c">辅导员账号</span>4</span></div>
<div class="cell bc  " style="left:1656.0px;top:294.50px;width:218.5px;height:52.75px"><span class="t"><span class="c">辅导员姓名</span>4</span></div>
<div class="cell bc opc " style="left:1874.5px;top:294.50px;width:360.0px;height:52.75px"><svg class="ic" style="left:30px;top:10px" width="22" height="22" viewBox="0 0 22 22"><circle cx="10.1" cy="10" r="7.8" fill="none" stroke="#1a84f8" stroke-width="1.9"/><path d="M15 15 L19 19" stroke="#1a84f8" stroke-width="3" stroke-linecap="round"/></svg><span class="ot" style="left:58px;color:#1890ff">详情</span><svg class="ic" style="left:121px;top:11px" width="24" height="22" viewBox="0 0 24 22"><path d="M3.5 18.5 V13.4 L11.5 5.4 L16.6 10.5 L8.6 18.5 Z" fill="none" stroke="#119797" stroke-width="2.1" stroke-linejoin="miter"/><path d="M13.6 1.6 L21 9" stroke="#119797" stroke-width="2.8"/></svg><span class="ot" style="left:147px;color:#129a9a">修改</span><svg class="ic" style="left:209.5px;top:12.5px" width="20" height="20" viewBox="0 0 20 20"><path d="M3 3 L17 17 M17 3 L3 17" stroke="#cc0000" stroke-width="3.1"/></svg><span class="ot" style="left:236.5px;color:#c80000">删除</span></div>
<div class="cell bc ck st " style="left:0.0px;top:347.25px;width:60.0px;height:52.75px"><span class="cb"></span><span class="dot">.</span></div>
<div class="cell bc idx st " style="left:60.0px;top:347.25px;width:60.0px;height:52.75px"><span class="t">6</span></div>
<div class="cell bc st " style="left:120.0px;top:347.25px;width:226.0px;height:52.75px"><span class="t">3333333333</span></div>
<div class="cell bc st " style="left:346.0px;top:347.25px;width:218.0px;height:52.75px"><span class="t"><span class="c">通知标题</span>3</span></div>
<div class="cell bc st " style="left:564.0px;top:347.25px;width:218.5px;height:52.75px"><span class="t">2023-05-18 00:00:17</span></div>
<div class="cell bc st " style="left:782.5px;top:347.25px;width:218.5px;height:52.75px"><span class="t"><span class="c">学生账号</span>3</span></div>
<div class="cell bc st " style="left:1001.0px;top:347.25px;width:218.0px;height:52.75px"><span class="t"><span class="c">学生姓名</span>3</span></div>
<div class="cell bc st " style="left:1219.0px;top:347.25px;width:219.0px;height:52.75px"><span class="t"><span class="c">班级</span>3</span></div>
<div class="cell bc st " style="left:1438.0px;top:347.25px;width:218.0px;height:52.75px"><span class="t"><span class="c">辅导员账号</span>3</span></div>
<div class="cell bc st " style="left:1656.0px;top:347.25px;width:218.5px;height:52.75px"><span class="t"><span class="c">辅导员姓名</span>3</span></div>
<div class="cell bc opc st" style="left:1874.5px;top:347.25px;width:360.0px;height:52.75px"><svg class="ic" style="left:30px;top:10px" width="22" height="22" viewBox="0 0 22 22"><circle cx="10.1" cy="10" r="7.8" fill="none" stroke="#1a84f8" stroke-width="1.9"/><path d="M15 15 L19 19" stroke="#1a84f8" stroke-width="3" stroke-linecap="round"/></svg><span class="ot" style="left:58px;color:#1890ff">详情</span><svg class="ic" style="left:121px;top:11px" width="24" height="22" viewBox="0 0 24 22"><path d="M3.5 18.5 V13.4 L11.5 5.4 L16.6 10.5 L8.6 18.5 Z" fill="none" stroke="#119797" stroke-width="2.1" stroke-linejoin="miter"/><path d="M13.6 1.6 L21 9" stroke="#119797" stroke-width="2.8"/></svg><span class="ot" style="left:147px;color:#129a9a">修改</span><svg class="ic" style="left:209.5px;top:12.5px" width="20" height="20" viewBox="0 0 20 20"><path d="M3 3 L17 17 M17 3 L3 17" stroke="#cc0000" stroke-width="3.1"/></svg><span class="ot" style="left:236.5px;color:#c80000">删除</span></div>
<div class="cell bc ck  " style="left:0.0px;top:400.00px;width:60.0px;height:52.75px"><span class="cb"></span><span class="dot">.</span></div>
<div class="cell bc idx  " style="left:60.0px;top:400.00px;width:60.0px;height:52.75px"><span class="t">7</span></div>
<div class="cell bc  " style="left:120.0px;top:400.00px;width:226.0px;height:52.75px"><span class="t">2222222222</span></div>
<div class="cell bc  " style="left:346.0px;top:400.00px;width:218.0px;height:52.75px"><span class="t"><span class="c">通知标题</span>2</span></div>
<div class="cell bc  " style="left:564.0px;top:400.00px;width:218.5px;height:52.75px"><span class="t">2023-05-18 00:00:17</span></div>
<div class="cell bc  " style="left:782.5px;top:400.00px;width:218.5px;height:52.75px"><span class="t"><span class="c">学生账号</span>2</span></div>
<div class="cell bc  " style="left:1001.0px;top:400.00px;width:218.0px;height:52.75px"><span class="t"><span class="c">学生姓名</span>2</span></div>
<div class="cell bc  " style="left:1219.0px;top:400.00px;width:219.0px;height:52.75px"><span class="t"><span class="c">班级</span>2</span></div>
<div class="cell bc  " style="left:1438.0px;top:400.00px;width:218.0px;height:52.75px"><span class="t"><span class="c">辅导员账号</span>2</span></div>
<div class="cell bc  " style="left:1656.0px;top:400.00px;width:218.5px;height:52.75px"><span class="t"><span class="c">辅导员姓名</span>2</span></div>
<div class="cell bc opc " style="left:1874.5px;top:400.00px;width:360.0px;height:52.75px"><svg class="ic" style="left:30px;top:10px" width="22" height="22" viewBox="0 0 22 22"><circle cx="10.1" cy="10" r="7.8" fill="none" stroke="#1a84f8" stroke-width="1.9"/><path d="M15 15 L19 19" stroke="#1a84f8" stroke-width="3" stroke-linecap="round"/></svg><span class="ot" style="left:58px;color:#1890ff">详情</span><svg class="ic" style="left:121px;top:11px" width="24" height="22" viewBox="0 0 24 22"><path d="M3.5 18.5 V13.4 L11.5 5.4 L16.6 10.5 L8.6 18.5 Z" fill="none" stroke="#119797" stroke-width="2.1" stroke-linejoin="miter"/><path d="M13.6 1.6 L21 9" stroke="#119797" stroke-width="2.8"/></svg><span class="ot" style="left:147px;color:#129a9a">修改</span><svg class="ic" style="left:209.5px;top:12.5px" width="20" height="20" viewBox="0 0 20 20"><path d="M3 3 L17 17 M17 3 L3 17" stroke="#cc0000" stroke-width="3.1"/></svg><span class="ot" style="left:236.5px;color:#c80000">删除</span></div>
<div class="cell bc ck st " style="left:0.0px;top:452.75px;width:60.0px;height:52.75px"><span class="cb"></span><span class="dot">.</span></div>
<div class="cell bc idx st " style="left:60.0px;top:452.75px;width:60.0px;height:52.75px"><span class="t">8</span></div>
<div class="cell bc st " style="left:120.0px;top:452.75px;width:226.0px;height:52.75px"><span class="t">1111111111</span></div>
<div class="cell bc st " style="left:346.0px;top:452.75px;width:218.0px;height:52.75px"><span class="t"><span class="c">通知标题</span>1</span></div>
<div class="cell bc st " style="left:564.0px;top:452.75px;width:218.5px;height:52.75px"><span class="t">2023-05-18 00:00:17</span></div>
<div class="cell bc st " style="left:782.5px;top:452.75px;width:218.5px;height:52.75px"><span class="t"><span class="c">学生账号</span>1</span></div>
<div class="cell bc st " style="left:1001.0px;top:452.75px;width:218.0px;height:52.75px"><span class="t"><span class="c">学生姓名</span>1</span></div>
<div class="cell bc st " style="left:1219.0px;top:452.75px;width:219.0px;height:52.75px"><span class="t"><span class="c">班级</span>1</span></div>
<div class="cell bc st " style="left:1438.0px;top:452.75px;width:218.0px;height:52.75px"><span class="t"><span class="c">辅导员账号</span>1</span></div>
<div class="cell bc st " style="left:1656.0px;top:452.75px;width:218.5px;height:52.75px"><span class="t"><span class="c">辅导员姓名</span>1</span></div>
<div class="cell bc opc st" style="left:1874.5px;top:452.75px;width:360.0px;height:52.75px"><svg class="ic" style="left:30px;top:10px" width="22" height="22" viewBox="0 0 22 22"><circle cx="10.1" cy="10" r="7.8" fill="none" stroke="#1a84f8" stroke-width="1.9"/><path d="M15 15 L19 19" stroke="#1a84f8" stroke-width="3" stroke-linecap="round"/></svg><span class="ot" style="left:58px;color:#1890ff">详情</span><svg class="ic" style="left:121px;top:11px" width="24" height="22" viewBox="0 0 24 22"><path d="M3.5 18.5 V13.4 L11.5 5.4 L16.6 10.5 L8.6 18.5 Z" fill="none" stroke="#119797" stroke-width="2.1" stroke-linejoin="miter"/><path d="M13.6 1.6 L21 9" stroke="#119797" stroke-width="2.8"/></svg><span class="ot" style="left:147px;color:#129a9a">修改</span><svg class="ic" style="left:209.5px;top:12.5px" width="20" height="20" viewBox="0 0 20 20"><path d="M3 3 L17 17 M17 3 L3 17" stroke="#cc0000" stroke-width="3.1"/></svg><span class="ot" style="left:236.5px;color:#c80000">删除</span></div>
</div>
<div id="sb"><div id="thumb"></div>
<svg style="position:absolute;left:6px;top:9px" width="12" height="7" viewBox="0 0 12 7"><path d="M0 7 L6 0 L12 7 Z" fill="#a3a3a3"/></svg>
<svg style="position:absolute;left:6px;top:1192px" width="12" height="7" viewBox="0 0 12 7"><path d="M0 0 L12 0 L6 7 Z" fill="#505050"/></svg>
</div>
</body></html>
